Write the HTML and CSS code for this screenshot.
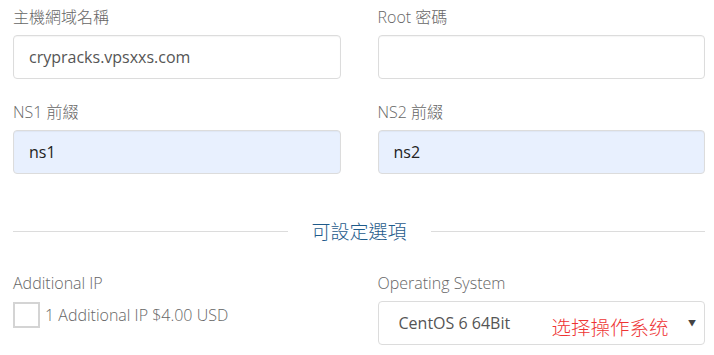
FILE: index.html
```html
<!DOCTYPE html>
<html lang="zh-Hant">
<head>
  <meta charset="UTF-8">
  <meta name="viewport" content="width=device-width, initial-scale=1.0">
  <title>Configure Server</title>
  <link rel="stylesheet" href="styles.css">
</head>
<body>

<div id="server-config">
    <div class="field-row">
        <div class="field">
            <label class="field-label">主機網域名稱</label>
            <input type="text" class="field-input" value="crypracks.vpsxxs.com">
        </div>
        <div class="field">
            <label class="field-label">Root 密碼</label>
            <input type="password" class="field-input">
        </div>
    </div>

    <div class="field-row">
        <div class="field">
            <label class="field-label">NS1 前綴</label>
            <input type="text" class="field-input filled" value="ns1">
        </div>
        <div class="field">
            <label class="field-label">NS2 前綴</label>
            <input type="text" class="field-input filled" value="ns2">
        </div>
    </div>

    <div class="sub-heading">
        <span class="sub-line"></span>
        <span class="sub-title">可設定選項</span>
        <span class="sub-line"></span>
    </div>

    <div class="field-row">
        <div class="field">
            <label class="field-label">Additional IP</label>
            <label class="check-option">
                <input type="checkbox" class="check-box">
                <span>1 Additional IP $4.00 USD</span>
            </label>
        </div>
        <div class="field">
            <label class="field-label">Operating System</label>
            <div class="select-wrap">
                <select class="field-select">
                    <option>CentOS 6 64Bit</option>
                    <option>CentOS 7 64Bit</option>
                    <option>Debian 9 64Bit</option>
                    <option>Ubuntu 16.04 64Bit</option>
                </select>
                <span class="select-arrow">▼</span>
                <span class="select-note">选择操作系统</span>
            </div>
        </div>
    </div>
</div>

</body>
</html>
```

FILE: styles.css
```css
body {
  font-family: 'Open Sans', 'Noto Sans CJK TC', sans-serif;
  background-color: #fff;
  margin: 0;
}

#server-config {
  padding: 6px 9px 0 13px;
}

.field-row {
  display: grid;
  grid-template-columns: 1fr 1fr;
  column-gap: 37px;
}

.field {
  margin-bottom: 22px;
}

.field-label {
  display: block;
  font-size: 16px;
  font-weight: 300;
  line-height: 22px;
  color: #666;
  margin-bottom: 7px;
}

.field-input {
  display: block;
  width: 100%;
  height: 44px;
  box-sizing: border-box;
  padding: 0 15px;
  font-family: 'Open Sans', sans-serif;
  font-size: 16px;
  color: #555;
  border: 1px solid #dcdcdc;
  border-radius: 4px;
  background-color: #fff;
  box-shadow: inset 0 1px 1px rgba(0, 0, 0, 0.04);
}

.field-input.filled {
  background-color: #e8f0fe;
  color: #222;
}

/* separator for the options */
.sub-heading {
  display: flex;
  align-items: center;
  margin: 22px 0 28px;
}

.sub-line {
  flex: 1;
  height: 1px;
  background-color: #dcdcdc;
}

.sub-title {
  padding: 0 24px;
  font-family: 'Noto Sans CJK TC', sans-serif;
  font-size: 19px;
  font-weight: 300;
  line-height: 26px;
  color: #1f5b8b;
}

.check-option {
  display: flex;
  align-items: center;
  gap: 5px;
  font-size: 16px;
  font-weight: 300;
  color: #666;
  padding-top: 1px;
}

.check-box {
  appearance: none;
  -webkit-appearance: none;
  width: 27px;
  height: 26px;
  margin: 0;
  border: 2px solid #d4d4d4;
  background-color: #fff;
}

.select-wrap {
  position: relative;
}

.field-select {
  appearance: none;
  -webkit-appearance: none;
  display: block;
  width: 100%;
  height: 44px;
  padding: 0 20px;
  font-family: 'Open Sans', sans-serif;
  font-size: 16px;
  color: #555;
  border: 1px solid #dcdcdc;
  border-radius: 4px;
  background-color: #fff;
}

.select-arrow {
  position: absolute;
  right: 9px;
  top: 16px;
  font-size: 8px;
  color: #444;
  pointer-events: none;
}

.select-note {
  position: absolute;
  left: 174px;
  top: 12px;
  font-family: 'Noto Sans CJK SC', sans-serif;
  font-size: 19.5px;
  font-weight: 300;
  line-height: 28px;
  color: #ee3333;
  pointer-events: none;
}
```
